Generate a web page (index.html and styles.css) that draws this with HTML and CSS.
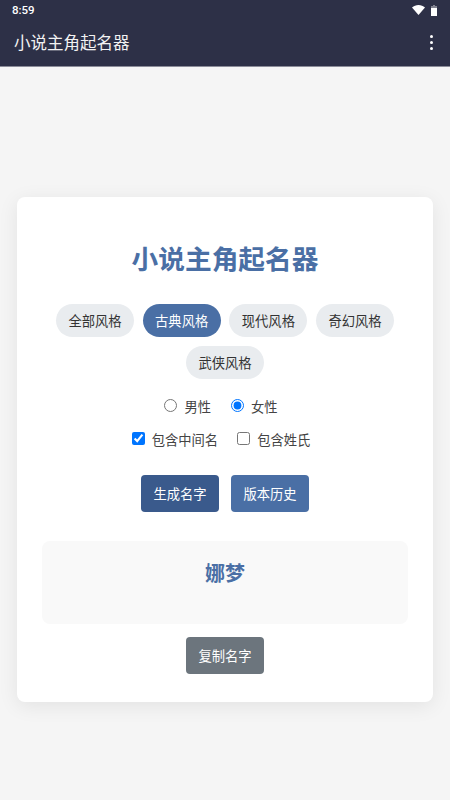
FILE: index.html
```html
<!DOCTYPE html>
<html>
	<head>
		<meta charset="utf-8" />
		<title>小说主角起名器</title>
		<link rel="stylesheet" href="styles.css">
	</head>
	<body>
		<div class="status-bar">
			<span class="clock">8:59</span>
			<div class="status-icons">
				<svg width="13" height="10" viewBox="0 0 13 10"><path d="M0 2.6C1.8 1 4 0 6.5 0S11.2 1 13 2.6L6.5 10z" fill="#fff"/></svg>
				<svg width="6" height="11" viewBox="0 0 6 11"><path d="M2 0h2v1h2v10H0V1h2z" fill="#fff" fill-opacity=".4"/><path d="M0 3h6v8H0z" fill="#fff"/></svg>
			</div>
		</div>
		<div class="app-bar">
			<span class="app-title">小说主角起名器</span>
			<div class="more">
				<i></i><i></i><i></i>
			</div>
		</div>
		<div class="main">
			<div class="card">
				<h1>小说主角起名器</h1>
				<div class="styles">
					<button class="pill">全部风格</button>
					<button class="pill active">古典风格</button>
					<button class="pill">现代风格</button>
					<button class="pill">奇幻风格</button>
					<button class="pill">武侠风格</button>
				</div>
				<div class="options gender">
					<label><input type="radio" name="gender"> 男性</label>
					<label><input type="radio" name="gender" checked> 女性</label>
				</div>
				<div class="options extras">
					<label><input type="checkbox" checked> 包含中间名</label>
					<label><input type="checkbox"> 包含姓氏</label>
				</div>
				<div class="actions">
					<button class="btn btn-dark">生成名字</button>
					<button class="btn btn-blue">版本历史</button>
				</div>
				<div class="result">娜梦</div>
				<button class="btn btn-grey">复制名字</button>
			</div>
		</div>
	</body>
</html>
```

FILE: styles.css
```css
* {
	box-sizing: border-box;
}
body {
	margin: 0;
	padding: 0;
	height: 800px;
	overflow: hidden;
	background-color: #f5f5f5;
	font-family: "Roboto", "Noto Sans CJK SC", sans-serif;
	color: #333;
}
button {
	border: none;
	font-family: inherit;
}
.status-bar {
	display: flex;
	justify-content: space-between;
	align-items: center;
	height: 20px;
	padding: 0 13px 0 12px;
	background-color: #2d3047;
	color: #fff;
}
.clock {
	font-size: 11.5px;
	font-weight: 500;
}
.status-icons {
	display: flex;
	align-items: center;
	gap: 6px;
}
.app-bar {
	display: flex;
	justify-content: space-between;
	align-items: center;
	height: 47px;
	padding: 0 17px 2px 14px;
	background-color: #2d3047;
	border-bottom: 1px solid #8b8c99;
	color: #f2f2f2;
}
.app-title {
	font-size: 16.5px;
}
.more {
	display: flex;
	flex-direction: column;
	gap: 3px;
}
.more i {
	width: 3px;
	height: 3px;
	border-radius: 50%;
	background-color: #fff;
}
.main {
	padding: 130px 17px 0;
}
.card {
	height: 505px;
	padding: 25px;
	border-radius: 8px;
	background-color: #fff;
	box-shadow: 0 4px 20px rgba(0, 0, 0, 0.08);
	text-align: center;
}
h1 {
	margin: 21px 0 27px;
	height: 34px;
	font-size: 26.7px;
	line-height: 34px;
	font-weight: 700;
	color: #4a6fa5;
}
.styles {
	display: flex;
	flex-wrap: wrap;
	justify-content: center;
	gap: 9px 8.7px;
	margin: 0 -10px;
}
.pill {
	width: 78px;
	height: 33px;
	padding: 0;
	border-radius: 17px;
	font-size: 13.3px;
	background-color: #e9ecef;
	color: #333;
}
.pill.active {
	background-color: #4a6fa5;
	color: #fff;
}
.options {
	display: flex;
	justify-content: center;
	gap: 20px;
	padding-right: 8px;
	font-size: 13.3px;
	line-height: 20px;
	color: #444;
}
.options label {
	display: flex;
	align-items: center;
	gap: 7px;
}
.options input {
	width: 13px;
	height: 13px;
	margin: 0;
	position: relative;
	top: -3px;
}
.gender {
	margin-top: 19px;
}
.extras {
	margin-top: 13px;
	gap: 19px;
}
.actions {
	display: flex;
	justify-content: center;
	gap: 12px;
	margin-top: 24px;
}
.btn {
	width: 78px;
	height: 37px;
	padding: 0;
	border-radius: 4px;
	font-size: 13.3px;
	color: #fff;
}
.btn-dark {
	background-color: #3a5a8c;
}
.btn-blue {
	background-color: #4a6fa5;
}
.btn-grey {
	margin-top: 13px;
	background-color: #6c757d;
}
.result {
	height: 83px;
	margin-top: 29px;
	padding-top: 18px;
	border-radius: 8px;
	background-color: #f9f9f9;
	font-size: 20px;
	line-height: 30px;
	font-weight: 700;
	color: #4a6fa5;
}
```
